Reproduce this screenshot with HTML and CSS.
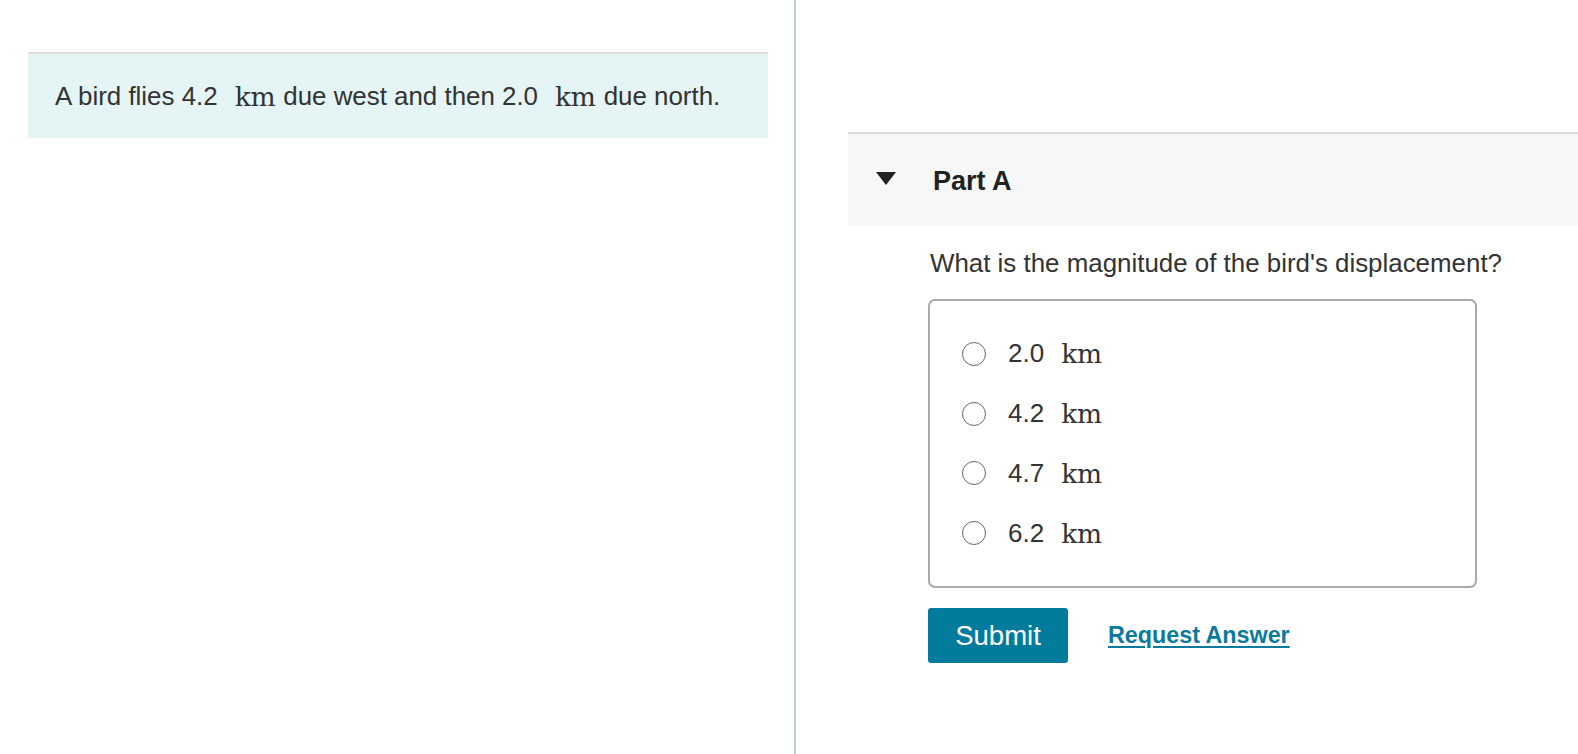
FILE: index.html
```html
<!DOCTYPE html>
<html lang="en">
<head>
<meta charset="utf-8">
<title>Part A</title>
<link rel="stylesheet" href="styles.css">
</head>
<body>
<div class="page">
  <div class="left">
    <div class="intro">
      A bird flies 4.2<span class="math">km</span>due west and then 2.0<span class="math">km</span>due north.
    </div>
  </div>
  <div class="divider"></div>
  <div class="right">
    <div class="part-header">
      <span class="caret"></span>
      <span class="part-title">Part A</span>
    </div>
    <div class="part-body">
      <p class="question">What is the magnitude of the bird's displacement?</p>
      <div class="options">
        <label class="option"><span class="radio"></span><span class="val">2.0</span><span class="math">km</span></label>
        <label class="option"><span class="radio"></span><span class="val">4.2</span><span class="math">km</span></label>
        <label class="option"><span class="radio"></span><span class="val">4.7</span><span class="math">km</span></label>
        <label class="option"><span class="radio"></span><span class="val">6.2</span><span class="math">km</span></label>
      </div>
      <div class="actions">
        <button class="submit">Submit</button>
        <a class="request" href="#">Request Answer</a>
      </div>
    </div>
  </div>
</div>
</body>
</html>
```

FILE: styles.css
```css
html, body {
  margin: 0;
  padding: 0;
  background: #fff;
}
body {
  font-family: "Liberation Sans", Arial, Helvetica, sans-serif;
  color: #333;
  font-size: 26px;
}
.page {
  display: flex;
  min-height: 754px;
}
.left {
  width: 794px;
  flex: none;
}
.intro {
  margin: 52px 0 0 28px;
  width: 713px;
  height: 84px;
  border-top: 2px solid #dddddd;
  background: #e5f5f6;
  padding-left: 27px;
  display: flex;
  align-items: center;
  font-size: 25.9px;
  white-space: nowrap;
}
.math {
  font-family: "DejaVu Serif", "Liberation Serif", serif;
  font-size: 26.5px;
  margin: 0 8px 0 17px;
  letter-spacing: -0.3px;
}
.divider {
  width: 2px;
  flex: none;
  background: #bccfe0;
}
.right {
  flex: 1;
  padding-top: 132px;
}
.part-header {
  margin-left: 52px;
  height: 91px;
  border-top: 2px solid #dddddd;
  background: #f7f7f7;
  display: flex;
  align-items: center;
  padding-left: 28px;
}
.caret {
  width: 0;
  height: 0;
  border-left: 10.5px solid transparent;
  border-right: 10.5px solid transparent;
  border-top: 13px solid #222;
  margin-top: -3px;
}
.part-title {
  font-weight: bold;
  font-size: 27px;
  margin-left: 37px;
  margin-top: 4px;
  color: #222;
}
.part-body {
  margin-left: 132px;
  width: 549px;
}
.question {
  margin: 22px 0 0 2px;
  line-height: 32px;
  font-size: 25.9px;
  white-space: nowrap;
}
.options {
  margin-top: 20px;
  border: 2px solid #aaaaaa;
  border-radius: 7px;
  padding: 23px 0 23px 0;
  display: flex;
  flex-direction: column;
}
.option {
  height: 59.75px;
  display: flex;
  align-items: center;
  padding-left: 32px;
}
.radio {
  width: 22px;
  height: 22px;
  border: 1.8px solid #666;
  border-radius: 50%;
  box-sizing: content-box;
  flex: none;
}
.val {
  margin-left: 22px;
  font-size: 26px;
}
.option .math {
  margin-left: 17px;
}
.actions {
  margin-top: 20px;
  display: flex;
  align-items: center;
}
.submit {
  width: 140px;
  height: 55px;
  border: none;
  border-radius: 3px;
  background: #037b9c;
  color: #fff;
  font-family: "Liberation Sans", Arial, Helvetica, sans-serif;
  font-size: 27.5px;
  padding: 0;
}
.request {
  margin-left: 40px;
  font-weight: bold;
  font-size: 23.3px;
  color: #0b7a9c;
  text-decoration: underline;
  text-underline-offset: 3px;
}
```
